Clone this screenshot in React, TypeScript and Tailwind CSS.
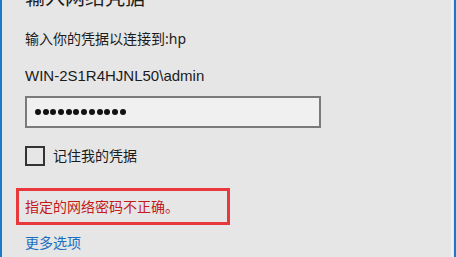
import React from "react";

const font = { fontFamily: '"Noto Sans", "Noto Sans CJK SC", sans-serif' };
const latin = { fontFamily: '"Liberation Sans", "Noto Sans CJK SC", sans-serif' };

export default function App() {
  return (
    <div className="flex h-[257px] w-[456px] overflow-hidden bg-[#e6e6e6] text-[#1b1b1b]" style={font}>
      <div className="w-[2px] shrink-0 bg-[#1979ca]" />
      <div className="flex flex-1 flex-col pl-[23px]">
        <div className="mt-[-15px] h-[26px] text-[20px] leading-[26px]">输入网络凭据</div>
        <div className="mt-[18px] text-[14px] leading-[20px]">输入你的凭据以连接到:hp</div>
        <div className="mt-[17px] text-[15px] leading-[20px]" style={latin}>WIN-2S1R4HJNL50\admin</div>
        <div className="mt-[10px] flex h-[32px] w-[296px] items-center gap-[1.7px] border-2 border-[#7a7a7a] bg-[#f0f0f0] pl-[8px]">
          {Array.from({ length: 12 }).map((_, i) => (
            <span key={i} className="h-[6px] w-[6px] rounded-full bg-[#111]" />
          ))}
        </div>
        <div className="mt-[18px] flex items-center gap-[8px]">
          <div className="h-[20px] w-[20px] border-2 border-[#333333]" />
          <span className="text-[14px] leading-[20px]">记住我的凭据</span>
        </div>
        <div className="ml-[-9px] mt-[22px] flex h-[37px] w-[214px] items-center border-[3px] border-[#e8383d] pl-[6px]">
          <span className="text-[14px] leading-[20px] text-[#c41a1a]">指定的网络密码不正确。</span>
        </div>
        <div className="mt-[8px] text-[14px] leading-[20px] text-[#1a6fc0]">更多选项</div>
      </div>
      <div className="w-[2px] shrink-0 bg-[#f2f2f2]" />
      <div className="w-[1px] shrink-0 bg-[#e6e6e6]" />
      <div className="w-[2px] shrink-0 bg-[#1979ca]" />
    </div>
  );
}
